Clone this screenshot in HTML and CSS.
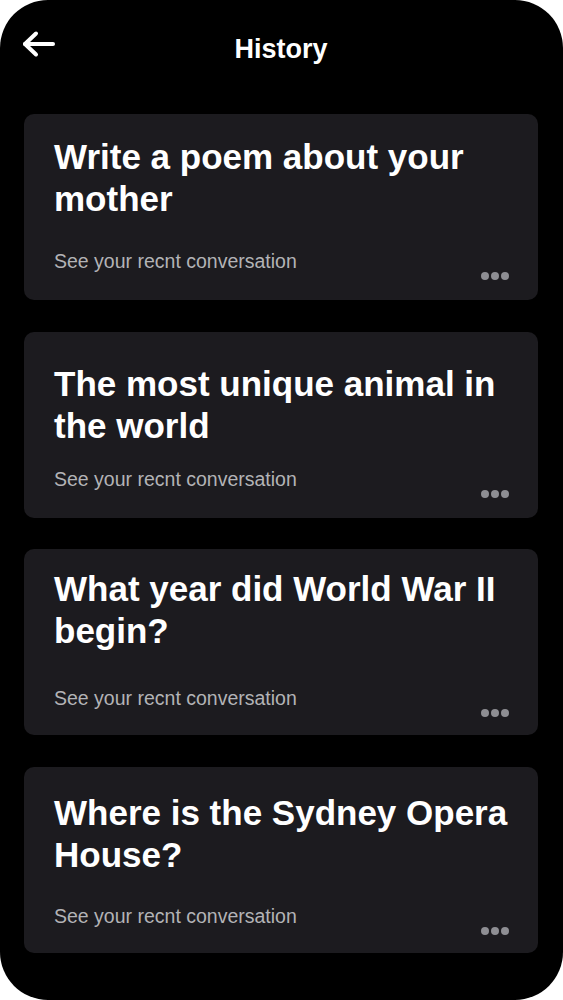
FILE: index.html
```html
<!DOCTYPE html>
<html lang="en">
<head>
<meta charset="utf-8">
<title>History</title>
<link rel="stylesheet" href="styles.css">
</head>
<body>
<div class="phone">
  <header class="topbar">
    <button class="back" aria-label="Back">
      <svg width="34" height="28" viewBox="0 0 34 28" fill="none" stroke="#fff" stroke-width="4" stroke-linecap="round" stroke-linejoin="round">
        <path d="M31 14H3"/>
        <path d="M14 3.5L3 14L14 24.5"/>
      </svg>
    </button>
    <h1 class="title">History</h1>
  </header>
  <main class="list">
    <article class="card">
      <h2 class="card-title">Write a poem about your mother</h2>
      <div class="card-foot">
        <p class="card-sub">See your recnt conversation</p>
        <span class="dots"><i class="dot"></i><i class="dot"></i><i class="dot"></i></span>
      </div>
    </article>
    <article class="card card--deep">
      <h2 class="card-title">The most unique animal in the world</h2>
      <div class="card-foot">
        <p class="card-sub">See your recnt conversation</p>
        <span class="dots"><i class="dot"></i><i class="dot"></i><i class="dot"></i></span>
      </div>
    </article>
    <article class="card card--high card--drop">
      <h2 class="card-title">What year did World War II begin?</h2>
      <div class="card-foot">
        <p class="card-sub">See your recnt conversation</p>
        <span class="dots"><i class="dot"></i><i class="dot"></i><i class="dot"></i></span>
      </div>
    </article>
    <article class="card card--mid card--drop">
      <h2 class="card-title">Where is the Sydney Opera House?</h2>
      <div class="card-foot">
        <p class="card-sub">See your recnt conversation</p>
        <span class="dots"><i class="dot"></i><i class="dot"></i><i class="dot"></i></span>
      </div>
    </article>
  </main>
</div>
</body>
</html>
```
FILE: styles.css
```css
html, body {
  margin: 0;
  padding: 0;
  background: #ffffff;
}

body {
  font-family: "Liberation Sans", Arial, sans-serif;
  color: #ffffff;
}

.phone {
  box-sizing: border-box;
  width: 563px;
  height: 1000px;
  background: #000000;
  border-radius: 48px;
  overflow: hidden;
  padding: 33px 25px 0 24px;
}

.topbar {
  display: grid;
  grid-template-columns: 1fr auto 1fr;
  align-items: start;
}

.back {
  justify-self: start;
  margin: -3px 0 0 -2px;
  padding: 0;
  border: 0;
  background: none;
  display: block;
  line-height: 0;
}

.title {
  margin: 0;
  font-size: 27px;
  line-height: 32px;
  font-weight: 700;
  text-align: center;
}

.list {
  margin-top: 49px;
  display: flex;
  flex-direction: column;
  gap: 31.5px;
}

.card {
  box-sizing: border-box;
  height: 186px;
  background: #1c1b1f;
  border-radius: 10px;
  padding: 22px 20px 20px 30px;
  display: flex;
  flex-direction: column;
}

.card--deep {
  padding-top: 31px;
}

.card--high {
  padding-top: 19px;
}

.card--mid {
  padding-top: 25px;
}

.card--drop {
  padding-bottom: 18px;
}

.card-title {
  margin: 0;
  font-size: 35px;
  line-height: 42px;
  font-weight: 700;
  color: #ffffff;
}

.card-foot {
  margin-top: auto;
  display: flex;
  justify-content: space-between;
  align-items: flex-start;
  padding-right: 9px;
}

.card-sub {
  margin: 0;
  font-size: 19.5px;
  line-height: 24px;
  color: #b3b3b6;
}

.dots {
  display: flex;
  gap: 2px;
  margin-top: 23px;
}

.dot {
  display: block;
  width: 8px;
  height: 8px;
  border-radius: 50%;
  background: #8e8e93;
}
```
